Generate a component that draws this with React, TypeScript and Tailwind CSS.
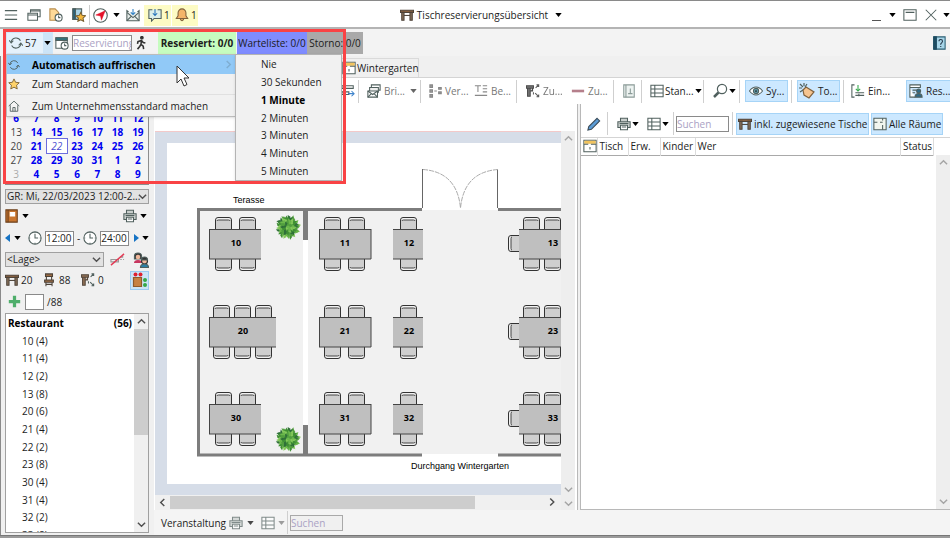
import type { ReactNode } from "react";

// ============================================================
// DATA
// ============================================================
interface Chair {
  x: number;
  y: number;
  side: "top" | "bottom" | "left";
}

interface FloorTable {
  nr: number;
  x: number;
  y: number;
  w: number;
  labelX: number;
  chairs: number[];
  side?: boolean;
}

const ROWS_Y = [229, 317, 404];

const TABLES: FloorTable[] = ROWS_Y.flatMap((y, i) => {
  const n = (i + 1) * 10;
  const wide = i === 1;
  return [
    { nr: n, x: 209, y, w: wide ? 67 : 52, labelX: wide ? 243 : 236, chairs: wide ? [213, 234, 255] : [215, 239] },
    { nr: n + 1, x: 319, y, w: 52, labelX: 345, chairs: [324, 348] },
    { nr: n + 2, x: 393, y, w: 30, labelX: 409, chairs: [400] },
    { nr: n + 3, x: 519, y, w: 90, labelX: 553, chairs: [523, 544, 565], side: true },
  ];
});

const WEEKS = [
  [6, 7, 8, 9, 10, 11, 12],
  [13, 14, 15, 16, 17, 18, 19],
  [20, 21, 22, 23, 24, 25, 26],
  [27, 28, 29, 30, 31, 1, 2],
  [3, 4, 5, 6, 7, 8, 9],
];

const SEATS = ["10 (4)", "11 (4)", "12 (2)", "13 (8)", "20 (6)", "21 (4)", "22 (2)", "23 (8)", "30 (4)", "31 (4)", "32 (2)", "33 (8)"];

const INTERVALS = ["Nie", "30 Sekunden", "1 Minute", "2 Minuten", "3 Minuten", "4 Minuten", "5 Minuten"];

// ============================================================
// ICONS
// ============================================================
function Icon({ children, className = "size-[14px]" }: { children: ReactNode; className?: string }) {
  return (
    <svg viewBox="0 0 16 16" className={`shrink-0 ${className}`} fill="none" stroke="#50605e" strokeWidth="1.2" aria-hidden="true">
      {children}
    </svg>
  );
}

const Caret = ({ className = "fill-black" }: { className?: string }) => (
  <svg viewBox="0 0 8 5" className={`h-[4px] w-[7px] shrink-0 ${className}`} aria-hidden="true">
    <path d="M0 0h8L4 5z" />
  </svg>
);

const Chevron = ({ className = "stroke-[#505050]" }: { className?: string }) => (
  <svg viewBox="0 0 10 10" className={`size-[9px] shrink-0 ${className}`} fill="none" strokeWidth="1.6" aria-hidden="true">
    <path d="M1 3l4 4 4-4" />
  </svg>
);

const SyncIcon = ({ className }: { className?: string }) => (
  <Icon className={className}>
    <path d="M2.5 7a5.6 5.6 0 0 1 10.6-1.6M13.5 9A5.6 5.6 0 0 1 3 10.8" />
    <path d="M.3 5l2.2 3 2.4-2.6M15.7 11l-2.2-3-2.4 2.6" />
  </Icon>
);

const TableIcon = ({ className }: { className?: string }) => (
  <Icon className={className}>
    <path d="M.5 2.500h15V5H.5z" fill="#9b6b43" stroke="#4c4238" />
    <path d="M2 5h2.600v9H2zM11.400 5H14v9h-2.600z" fill="#8a725c" stroke="#4c4238" />
    <path d="M4.600 8.500h6.800" stroke="#4c4238" />
  </Icon>
);

const PrinterIcon = () => (
  <Icon>
    <path d="M4 5V1.500h8V5M4 12H1V5.500h14V12h-3" fill="#c9cfcd" />
    <path d="M4 9.500h8v5H4z" fill="#fff" />
    <path d="M5.500 11.500h5M3 7.500h10" />
  </Icon>
);

const GridIcon = () => (
  <Icon>
    <path d="M1 1.500h14v13H1zM5.500 1.500v13M1 5.800h14M1 10.200h14" fill="#fff" />
  </Icon>
);

const MailIcon = () => (
  <Icon>
    <path d="M1 5v9.500h14V5" fill="#e6ecea" />
    <path d="M1 5l7 6 7-6M1 14.500l5-5M15 14.500l-5-5M1 5V3l2 1.500M15 5V3l-2 1.500" />
    <path d="M8 1v6M5.500 5L8 7.500 10.500 5" stroke="#2d7fc4" />
  </Icon>
);

// Stack of letters, for the print-letters button
const LettersIcon = () => (
  <Icon>
    <path d="M5 5V1h10v6h-2" fill="#fff" />
    <path d="M3 8V4h10v6" fill="#eee" />
    <path d="M1 8h11v7H1z" fill="#fff" />
    <path d="M1 8l5.500 4L12 8M1 15l4-4M12 15l-4-4" />
  </Icon>
);

const ClockIcon = () => (
  <Icon>
    <circle cx="8" cy="8" r="7" fill="#fff" />
    <path d="M8 3.500V8h3.500" />
    <path d="M8 1.500v1M8 13.500v1M1.500 8h1M13.500 8h1" />
  </Icon>
);

const RoomIcon = () => (
  <Icon>
    <path d="M1 1.500h14v13H1z" fill="#fff" />
    <path d="M1.500 2h13v3.500h-13z" fill="#f2c45e" stroke="none" />
    <path d="M1 6h5M9 6h6M8 9v3" />
  </Icon>
);

const StarIcon = ({ className }: { className?: string }) => (
  <Icon className={className}>
    <path d="M8 1.200l2.100 4.500 4.900.6-3.600 3.400.9 4.900L8 12.200l-4.300 2.400.9-4.900L1 6.300l4.900-.6z" fill="#ffd36b" stroke="#7a6132" />
  </Icon>
);

const MoveIcon = () => (
  <Icon>
    <path d="M.5 2h8v2.800h-8zM1.800 4.800h3V14h-3zM5 8h2.500V5" fill="#8f6f54" stroke="#55493e" />
    <path d="M11 4.500l3.500-3.500M12 1h2.500v2.500M10.500 10.500l4 4M12 14.500h2.500V12M8.500 9.500V12" />
  </Icon>
);

// ============================================================
// SMALL PARTS
// ============================================================
const Sep = () => <span className="h-[23px] w-px shrink-0 bg-[#cfcfcf]" />;

function ToolButton({ className = "gap-[3px]", children, active = false, muted = false, label }: {
  className?: string;
  children: ReactNode;
  active?: boolean;
  muted?: boolean;
  label?: string;
}) {
  return (
    <button
      type="button"
      aria-label={label}
      className={`flex h-[22px] shrink-0 items-center whitespace-nowrap ${
        active ? "border border-[#a6d4f7] bg-[#cce8ff]" : ""
      } ${muted ? "text-[#777]" : ""} ${className}`}
    >
      {children}
    </button>
  );
}

// ============================================================
// FLOOR PLAN
// ============================================================
function ChairShape({ x, y, side }: Chair) {
  const turn = side === "top" ? "" : side === "bottom" ? " rotate(180 8.500 6)" : " rotate(-90 8.500 8.500)";
  return (
    <g transform={`translate(${x} ${y})${turn}`}>
      <path d="M1 3v9h15V3z" fill="#cfcfcf" />
      <path d="M.5 12V3q0-2.500 2.500-2.500h11q2.500 0 2.500 2.500v9" fill="none" stroke="#333" />
      <path d="M2 4q0-1 1.500-1h10q1.500 0 1.500 1" fill="none" stroke="#444" />
    </g>
  );
}

// Leaves are laid out on a spiral so that the bush fills evenly
function Plant({ x, y }: { x: number; y: number }) {
  const greens = ["#3f8f34", "#6cb84c", "#2f7038", "#86c95c", "#529f3f"];
  return (
    <g transform={`translate(${x} ${y})`}>
      <circle r="9" fill="#4c9a3e" />
      {Array.from({ length: 70 }, (_, i) => {
        const k = 69 - i;
        const r = Math.sqrt(k) * 1.25;
        const a = k * 137.5;
        return (
          <path
            key={i}
            d="M-2 0L0-1.500 3 0 0 1.500z"
            fill={greens[(i * 3 + (i >> 1)) % 5]}
            transform={`rotate(${a}) translate(${r} 0) rotate(${(i * 53) % 90 - 45})`}
          />
        );
      })}
    </g>
  );
}

function FloorPlan() {
  return (
    <svg viewBox="155 132 600 363" width="600" height="363" className="block max-w-none shrink-0" role="img" aria-label="Tischplan">
      <rect x="155" y="132" width="600" height="363" fill="#d6dde8" />
      <rect x="167" y="143" width="588" height="341" fill="#fff" />
      <rect x="199" y="210" width="556" height="244" fill="#f1f1f1" />
      <rect x="303" y="210" width="5" height="244" fill="#fff" />
      <path d="M422 209.500H198.500V455H422M498 209.500H755M498 455H755" fill="none" stroke="#7d7d7d" strokeWidth="3" />
      <path d="M303 210h5v30h-5zM303 425h5v30h-5z" fill="#7d7d7d" />
      <path d="M422.500 169V208M497.500 169V208" stroke="#666" />
      <path d="M423 169.500Q457 172 460.500 208M498 169.500Q464 172 460.500 208" fill="none" stroke="#aaa" strokeDasharray="5 1" />

      {TABLES.map((t) => (
        <g key={t.nr}>
          {t.chairs.map((cx) => (
            <g key={cx}>
              <ChairShape x={cx} y={t.y - 12} side="top" />
              <ChairShape x={cx} y={t.y + 30} side="bottom" />
            </g>
          ))}
          {t.side && <ChairShape x={t.x - 11} y={t.y + 6} side="left" />}
          <rect x={t.x} y={t.y} width={t.w} height="30" fill="#bfbfbf" />
          <path d={`M${t.x} ${t.y + 0.5}h${t.w}M${t.x} ${t.y + 30}h${t.w}`} stroke="#444" />
          {t.nr % 10 < 2 && <path d={`M${t.x + 0.5} ${t.y}v30`} stroke="#444" />}
          {t.nr % 10 === 1 && <path d={`M${t.x + t.w} ${t.y}v30`} stroke="#444" />}
          <text x={t.labelX} y={t.y + 17} textAnchor="middle" className="fill-black text-[9px] font-bold">{t.nr}</text>
        </g>
      ))}

      <Plant x={288} y={227} />
      <Plant x={288} y={439} />
      <text x="233" y="203" className="fill-black font-['Liberation_Sans',sans-serif] text-[9px]">Terasse</text>
      <text x="411" y="469" className="fill-black font-['Liberation_Sans',sans-serif] text-[9px]">Durchgang Wintergarten</text>
    </svg>
  );
}

// ============================================================
// LAYOUT
// ============================================================
function TitleBar() {
  return (
    <header className="flex h-[29px] shrink-0 items-center border-t border-b-2 border-t-[#8a8a8a] border-b-[#b4b4b4] bg-white pt-[2px]">
      <div className="flex flex-1 items-center pl-1">
        <button type="button" aria-label="Menü" className="w-[23px]">
          <Icon><path d="M1 3h14M1 8h14M1 13h14" /></Icon>
        </button>
        <button type="button" aria-label="Fenster" className="w-[22px]">
          <Icon><path d="M4 5V2h11v8h-3M4 3.500h11M1 6h11v8H1zM1 8h11" /></Icon>
        </button>
        <button type="button" aria-label="Verlauf" className="w-[23px]">
          <Icon>
            <path d="M1 1h6l4 4v9H1z" fill="#ffd997" stroke="#b98d4b" />
            <circle cx="11" cy="11" r="4" fill="#fff" />
            <path d="M11 8.500V11h2" />
          </Icon>
        </button>
        <button type="button" aria-label="Favoriten" className="w-[17px]">
          <Icon>
            <path d="M1 1h10v12H1z" fill="#a9d3e6" />
            <path d="M1 1h3v12H1z" fill="#27627c" />
            <path d="M10 5l1.600 3.400 3.700.5-2.700 2.600.7 3.700L10 13.400l-3.300 1.800.7-3.700L4.700 8.900l3.700-.5z" fill="#f5b83d" stroke="#7a6132" />
          </Icon>
        </button>
        <span className="mr-[3px] h-[20px] w-px bg-[#ccc]" />
        <button type="button" aria-label="Navigation" className="flex w-[33px] items-center gap-[5px]">
          <Icon className="size-[15px]">
            <circle cx="8" cy="8" r="7.200" fill="#fff" />
            <path d="M13 3L9 13 8 8.500 3 7.500z" fill="#e5122a" stroke="#e5122a" strokeWidth="0.500" />
          </Icon>
          <Caret />
        </button>
        <button type="button" aria-label="Nachrichten" className="flex w-[18px] justify-start"><MailIcon /></button>
        <button type="button" className="flex h-[21px] w-[27px] items-center gap-[2px] bg-[#fdfbc4] pl-1">
          <Icon><path d="M5 2H1v10h3v3l3-3h8V2h-4" fill="#dcefe9" /><path d="M8 1v7M5.500 6L8 8.500 10.500 6" stroke="#2372b9" /></Icon>
          1
        </button>
        <button type="button" className="ml-px flex h-[21px] w-[26px] items-center gap-[2px] bg-[#fdfbc4] pl-[3px]">
          <Icon><path d="M8 1a4.500 4.500 0 0 0-4.500 4.500V9L1.500 12h13l-2-3V5.500A4.500 4.500 0 0 0 8 1zM6 12.500q2 4 4 0" fill="#f4b56a" stroke="#80613c" /></Icon>
          1
        </button>
      </div>
      <div className="flex items-center gap-[3px] pl-[8px]">
        <TableIcon />
        <h1>Tischreservierungsübersicht</h1>
        <span className="pl-[4px]"><Caret /></span>
      </div>
      <div className="flex flex-1 items-center justify-end">
        <button type="button" aria-label="Minimieren" className="mr-[8px] flex h-[12px] w-[9px] items-end border-b border-[#555]" />
        <button type="button" aria-label="Optionen"><Caret /></button>
        <button type="button" aria-label="Maximieren" className="ml-[7px]"><Icon><path d="M1 2h14v12H1zM3 5h10" /></Icon></button>
        <button type="button" aria-label="Schließen" className="ml-[7px] mr-[5px]"><Icon><path d="M2 2l12 12M14 2L2 14" /></Icon></button>
        <Caret />
      </div>
    </header>
  );
}

function StatusBar() {
  return (
    <div className="flex h-[27px] shrink-0 items-center bg-[#f3f3f3] pl-[6px] pr-[4px]">
      <button type="button" className="flex h-[22px] w-[47px] items-center gap-[2px] border border-[#d0e6f8] bg-[#e5f1fb] pl-[2px]">
        <SyncIcon />
        57
        <span className="ml-auto flex h-full w-[9px] items-center justify-center bg-[#cce4f7]"><Caret /></span>
      </button>
      <button type="button" aria-label="Kalender" className="w-[19px] pl-[2px]">
        <Icon>
          <path d="M1 2h13v12H1z" fill="#fff" />
          <path d="M1 2h13v3H1z" fill="#2b7482" />
          <circle cx="11" cy="11" r="4" fill="#fff" />
          <path d="M11 8.500V11h2" />
        </Icon>
      </button>
      <input aria-label="Reservierung" placeholder="Reservierung" className="h-[16px] w-[60px] border border-[#8a8a8a] bg-white placeholder:text-[#aaa2c4]" />
      <button type="button" aria-label="Walk-in" className="w-[26px] pl-[2px]">
        <Icon><circle cx="9" cy="2" r="1.500" fill="#333" stroke="#333" /><path d="M8.500 5L8 9.500l2.500 2L11 15M8 9.500L6.500 12 4 15M4 9l.5-2.500 4-1.500 2 2.500L13 8" stroke="#333" strokeWidth="1.800" /></Icon>
      </button>
      <button type="button" className="h-[22px] w-[78px] bg-[#c6fcbf] font-bold whitespace-nowrap">Reserviert: 0/0</button>
      <button type="button" className="ml-px h-[22px] w-[70px] bg-[#7f8cff] whitespace-nowrap">Warteliste: 0/0</button>
      <button type="button" className="h-[22px] w-[56px] bg-[#a9a9a9] whitespace-nowrap">Storno: 0/0</button>
      <button type="button" aria-label="Hilfe" className="ml-auto">
        <Icon>
          <path d="M2 1h13v14H2z" fill="#a7d5e8" stroke="#2b5f73" />
          <path d="M2 1h3v14H2z" fill="#1d4c61" stroke="#1d4c61" />
          <path d="M8 6q0-2 2-2t2 2q0 1-2 3v1M10 11.500v1" stroke="#234" />
        </Icon>
      </button>
    </div>
  );
}

function Calendar() {
  return (
    <div className="flex h-[129px] shrink-0 flex-col justify-end overflow-hidden border border-[#8d8d8d] bg-[#f4f4f4] pb-[3px]">
      <table className="w-full table-fixed text-center">
        <tbody>
          {WEEKS.map((week, w) => (
            <tr key={w} className="h-[14px] leading-[14px]">
              {week.map((day, d) => {
                const selected = w === 2 && d === 2;
                const plain = d === 0 && w > 0;
                return (
                  <td
                    key={d}
                    className={
                      selected
                        ? "bg-white p-0 italic text-[#4a4ad0] outline outline-[#6d6dde]"
                        : plain
                          ? w === 4 ? "p-0 text-[#aaa]" : "p-0 text-[#444]"
                          : "p-0 font-bold text-[#0000f0]"
                    }
                  >
                    {day}
                  </td>
                );
              })}
            </tr>
          ))}
        </tbody>
      </table>
    </div>
  );
}

function Sidebar() {
  return (
    <aside className="mr-[4px] ml-px flex w-[144px] shrink-0 flex-col pb-[2px]">
      <Calendar />
      <label className="relative mt-[4px] block h-[15px] shrink-0">
        <select aria-label="Gruppe" className="block h-full w-full appearance-none border border-[#a0a0a0] bg-[#e2e2e2] px-px leading-[13px]">
          <option>GR: Mi, 22/03/2023 12:00-2...</option>
        </select>
        <span className="pointer-events-none absolute top-[3px] right-[2px]"><Chevron /></span>
      </label>

      <div className="flex h-[23px] shrink-0 items-center justify-between pr-[2px]">
        <button type="button" aria-label="Buch" className="flex items-center gap-[3px]">
          <Icon><path d="M1 1h13v14H1z" fill="#c9762f" stroke="#6b3f1b" /><path d="M6 4h5v4H6z" fill="#fff" stroke="#fff" /><path d="M3.500 1v14" stroke="#6b3f1b" /></Icon>
          <Caret />
        </button>
        <button type="button" aria-label="Drucken" className="flex items-center gap-[3px]"><PrinterIcon /><Caret /></button>
      </div>

      <div className="flex h-[22px] shrink-0 items-center gap-[3px]">
        <button type="button" aria-label="Zurück" className="flex items-center gap-[4px]">
          <svg viewBox="0 0 5 8" className="h-[8px] w-[5px] fill-[#1673c4]"><path d="M5 0v8L0 4z" /></svg>
          <Caret />
        </button>
        <span className="ml-[4px]"><ClockIcon /></span>
        <input aria-label="Von" defaultValue="12:00" className="h-[15px] w-[29px] border border-[#8a8a8a] bg-white" />
        <span>-</span>
        <ClockIcon />
        <input aria-label="Bis" defaultValue="24:00" className="h-[15px] w-[29px] border border-[#8a8a8a] bg-white" />
        <button type="button" aria-label="Weiter" className="ml-auto flex items-center gap-[3px]">
          <svg viewBox="0 0 5 8" className="h-[8px] w-[5px] fill-[#1673c4]"><path d="M0 0v8L5 4z" /></svg>
          <Caret />
        </button>
      </div>

      <div className="flex h-[21px] shrink-0 items-center">
        <label className="relative block h-[15px] w-[99px]">
          <select aria-label="Lage" className="block h-full w-full appearance-none border border-[#a0a0a0] bg-[#e2e2e2] px-px leading-[13px]">
            <option>&lt;Lage&gt;</option>
          </select>
          <span className="pointer-events-none absolute top-[3px] right-[3px]"><Chevron /></span>
        </label>
        <button type="button" aria-label="Nichtraucher" className="ml-[6px]">
          <Icon className="size-[15px]"><path d="M1 8h8v2.500H1zM11 8h1.500M14 8h1M11 5.500h2.500V4" stroke="#999" /><path d="M1 14L15 2" stroke="#e33b55" strokeWidth="1.500" /></Icon>
        </button>
        <button type="button" aria-label="Gäste" className="ml-auto">
          <Icon className="size-[16px]">
            <path d="M1.500 7V4q0-3 3.500-3t3.500 3v3z" fill="#333" />
            <circle cx="5" cy="5" r="2.300" fill="#f0b79a" stroke="none" />
            <path d="M1 11q0-3 4-3t4 3z" fill="#c7365f" stroke="none" />
            <circle cx="11.500" cy="9" r="3" fill="#f0b79a" stroke="#333" />
            <path d="M8.500 8q0-3 3-3t3 3z" fill="#333" />
            <path d="M7.500 15.500q0-3.500 4-3.500t4 3.500z" fill="#2b7fa6" />
          </Icon>
        </button>
      </div>

      <div className="flex h-[20px] shrink-0 items-center">
        <span className="flex w-[37px] items-center gap-[2px]"><TableIcon />20</span>
        <span className="flex w-[39px] items-center gap-[3px]">
          <Icon><path d="M4 1h8v3H4zM3 8h10v2.500H3z" fill="#9b6b43" stroke="#4c4238" /><path d="M5 4v4M11 4v4M4.500 10.500V15M11.500 10.500V15M4.500 13h7" stroke="#4c4238" /></Icon>
          88
        </span>
        <span className="flex items-center gap-[3px]"><MoveIcon />0</span>
        <button type="button" aria-label="Belegung" className="ml-auto flex size-[19px] items-center justify-center border border-[#9ccbf2] bg-[#cce4f7]">
          <Icon className="size-[16px]">
            <path d="M1.500 5.500h8v9h-8z" fill="#c78143" stroke="#8f5a2b" />
            <g stroke="none"><circle cx="3.500" cy="2.500" r="2" fill="#e02030" /><circle cx="8.500" cy="2.500" r="2" fill="#e02030" /><circle cx="13" cy="8" r="2" fill="#35a84a" /><circle cx="13" cy="13" r="2" fill="#35a84a" /></g>
          </Icon>
        </button>
      </div>

      <div className="flex h-[23px] shrink-0 items-center pl-[3px]">
        <button type="button" aria-label="Hinzufügen"><Icon className="size-[13px]"><path d="M8 1v14M1 8h14" stroke="#4fae6b" strokeWidth="4" /></Icon></button>
        <input aria-label="Personen" className="ml-[4px] mr-[3px] h-[16px] w-[19px] border border-[#8a8a8a] bg-white" />
        /88
      </div>

      <div className="flex min-h-0 flex-1 border border-[#a0a0a0] bg-white">
        <div className="flex-1 overflow-hidden">
          <ul className="flex h-[230px] flex-col">
            <li className="flex flex-1 items-center justify-between px-[2px] font-bold text-black"><span>Restaurant</span><span>(56)</span></li>
            {SEATS.map((s) => <li key={s} className="flex flex-1 items-center pl-[16px]">{s}</li>)}
          </ul>
        </div>
        <div className="flex w-[14px] flex-col items-center bg-[#f0f0f0]">
          <span className="flex h-[15px] rotate-180 items-center"><Chevron /></span>
          <span className="h-[106px] w-full bg-[#cdcdcd]" />
          <span className="mt-auto flex h-[15px] items-center"><Chevron /></span>
        </div>
      </div>
    </aside>
  );
}

function MainToolbar() {
  return (
    <div className="flex h-[27px] shrink-0 items-center overflow-hidden border-t border-[#d4d4d4] bg-white pl-[187px]">
      <ToolButton className="w-[17px]" muted label="Anordnen"><Icon><path d="M1 2h13v3H1zM1 9h8v3H1z" /><path d="M8 11h7M12 8l3 3-3 3" stroke="#3e83cb" /></Icon></ToolButton>
      <Sep />
      <ToolButton className="w-[61px] gap-[3px] pl-[8px]" muted><LettersIcon />Bri...<span className="ml-auto pr-[3px]"><Caret className="fill-[#666]" /></span></ToolButton>
      <Sep />
      <ToolButton className="w-[46px] gap-[2px] pl-[8px]" muted><Icon><path d="M1 1h3v3H1zM1 6.500h3v3H1zM1 12h3v3H1zM11 4h3v2h-3zM11 9h3v2h-3zM6 8h3" fill="#999" stroke="#888" /></Icon>Ver...</ToolButton>
      <ToolButton className="w-[49px] gap-[3px] pl-[7px]" muted><Icon><path d="M1 2h7M4.500 2v7M10 2h5M10 5.500h5M10 9h5M1 13h14" stroke="#888" /></Icon>Be...</ToolButton>
      <Sep />
      <ToolButton className="w-[54px] gap-[3px] pl-[9px] grayscale" muted><MoveIcon />Zu...</ToolButton>
      <ToolButton className="w-[42px] gap-[3px]" muted><Icon><path d="M1 8h14" stroke="#b57f8b" strokeWidth="3" /></Icon>Zu...</ToolButton>
      <Sep />
      <ToolButton className="w-[27px] pl-[8px]" muted label="Adressbuch"><Icon><path d="M2 1h12v14H2z" fill="#edf3f1" stroke="#8a9a97" /><path d="M4.500 1v14M7 11h5M9.500 5v6" stroke="#8a9a97" /></Icon></ToolButton>
      <Sep />
      <ToolButton className="w-[61px] gap-px pl-[8px]"><GridIcon />Stan...<Caret /></ToolButton>
      <Sep />
      <ToolButton className="w-[35px] gap-px pl-[8px]" label="Zoom"><Icon className="size-[16px]"><circle cx="10" cy="6" r="4.600" fill="#fff" /><path d="M6.500 9.500L2 14" strokeWidth="2.500" /></Icon><Caret /></ToolButton>
      <Sep />
      <ToolButton active className="ml-[5px] mr-[3px] w-[43px] gap-[3px] pl-[3px]"><Icon><path d="M.5 8Q4 3.500 8 3.500T15.500 8Q12 12.500 8 12.500T.5 8z" fill="#fff" /><circle cx="8" cy="8" r="3" fill="#5f9cad" /><circle cx="8" cy="8" r="1" fill="#222" stroke="none" /></Icon>Sy...</ToolButton>
      <Sep />
      <ToolButton active className="ml-[5px] mr-[3px] w-[43px] gap-[3px] pl-px"><Icon className="size-[16px]"><path d="M4 7l3-3 8 5-5 6-5-3z" fill="#f6c48f" stroke="#80613c" /><path d="M1 1l3 3M5 0v3M0 5h3M8 1L6 4M1 9l3-2" /></Icon>To...</ToolButton>
      <Sep />
      <ToolButton className="w-[62px] gap-[3px] pl-[7px]"><Icon><path d="M4 1H1v14h3M5 13h10M5 10h10M9 11v3" /><path d="M8 1v7M5.500 5.500L8 8l2.500-2.500" stroke="#35a84a" /></Icon>Ein...</ToolButton>
      <ToolButton active className="w-[45px] gap-[3px] pl-[2px]"><Icon><path d="M1 1h12v3H1zM1 4v11h6M4 7h5M4 10h3" fill="#fff" /><circle cx="11" cy="8" r="2.300" fill="#2d6b8a" /><path d="M7 15q0-4 4-4t4 4z" fill="#2d6b8a" /></Icon>Res...</ToolButton>
    </div>
  );
}

function PlanPane() {
  return (
    <section className="flex w-[424px] shrink-0 flex-col border-r border-[#b8b8b8] bg-white">
      <div className="flex min-h-0 flex-1 pt-[27px]">
        <div className="flex min-w-0 flex-1 flex-col pl-px">
          <div className="min-h-0 flex-1 overflow-hidden border-t border-[#f3c9c9] bg-[#d6dde8]"><FloorPlan /></div>
          <div className="flex h-[15px] shrink-0 items-center bg-[#f0f0f0]">
            <span className="flex w-[15px] rotate-90 justify-center"><Chevron /></span>
            <span className="h-[13px] w-[305px] bg-[#cdcdcd]" />
            <span className="ml-auto flex w-[18px] -rotate-90 justify-center"><Chevron /></span>
          </div>
        </div>
        <div className="mr-[2px] flex w-[14px] shrink-0 flex-col items-center bg-[#eee]">
          <span className="flex h-[16px] rotate-180 items-center"><Chevron className="stroke-[#a5a5a5]" /></span>
          <span className="mt-auto flex h-[14px] items-center"><Chevron className="stroke-[#a5a5a5]" /></span>
          <span className="flex h-[14px] items-center"><Chevron className="stroke-[#a5a5a5]" /></span>
        </div>
      </div>
    </section>
  );
}

function ReservationPane() {
  return (
    <section className="ml-[2px] flex min-w-0 flex-1 flex-col border-b border-l border-[#b8b8b8] bg-white">
      <div className="flex h-[33px] shrink-0 items-end overflow-hidden pb-[2px]">
        <ToolButton className="w-[26px] pl-[6px]" label="Bearbeiten"><Icon><path d="M11.500 1.500l3 3L5 14l-4 1 1-4z" fill="#5b9bd5" stroke="#3b4b58" /></Icon></ToolButton>
        <Sep />
        <ToolButton className="w-[39px] gap-px pl-[9px]" label="Liste drucken"><PrinterIcon /><Caret /></ToolButton>
        <ToolButton className="w-[26px] gap-px" label="Layout"><GridIcon /><Caret /></ToolButton>
        <Sep />
        <span className="flex h-[22px] w-[58px] items-center pl-[2px]"><input aria-label="Reservierungen suchen" placeholder="Suchen" className="h-[16px] w-[53px] border border-[#8a8a8a] bg-white placeholder:text-[#aaa2c4]" /></span>
        <Sep />
        <ToolButton active className="ml-[3px] w-[133px] gap-[2px] pl-px"><TableIcon />inkl. zugewiesene Tische</ToolButton>
        <ToolButton active className="ml-[2px] w-[72px] gap-[2px] pl-px"><Icon><path d="M1 1.500h14v13H1z" fill="#f2f6ef" /><path d="M1 6h4M8 6h3M11 1.500V4M11 9v5.500" /></Icon>Alle Räume</ToolButton>
      </div>
      <div className="flex min-h-0 flex-1 border-t border-[#d4d4d4]">
        <div className="min-w-0 flex-1">
          <table className="w-full table-fixed text-left">
            <thead>
              <tr className="h-[17px] border-b border-[#a9a9a9] leading-[14px] [&>th]:border-r [&>th]:border-[#dcdcdc] [&>th]:p-0 [&>th]:pl-[2px] [&>th]:font-normal">
                <th className="w-[16px]" aria-label="Raum"><RoomIcon /></th>
                <th className="w-[31px]">Tisch</th>
                <th className="w-[32px]">Erw.</th>
                <th className="w-[35px]">Kinder</th>
                <th>Wer</th>
                <th className="w-[33px]">Status</th>
              </tr>
            </thead>
          </table>
        </div>
        <div className="mt-[17px] ml-[2px] flex w-[14px] shrink-0 flex-col items-center bg-[#eee]">
          <span className="flex h-[15px] rotate-180 items-center"><Chevron className="stroke-[#a5a5a5]" /></span>
          <span className="mt-auto flex h-[15px] items-center"><Chevron className="stroke-[#a5a5a5]" /></span>
        </div>
      </div>
    </section>
  );
}

function RefreshMenu() {
  return (
    <div role="menu" className="absolute top-[54px] left-[6px] flex w-[230px] flex-col border border-[#bcbcbc] bg-[#f1f1f1] shadow">
      <button type="button" role="menuitem" className="flex h-[19px] items-center bg-[#91c9f7] font-bold text-black">
        <span className="w-[25px] pl-px"><SyncIcon className="size-[12px]" /></span>
        Automatisch auffrischen
        <span className="ml-auto mr-[2px] -rotate-90"><Chevron className="stroke-[#7faed2]" /></span>
      </button>
      <button type="button" role="menuitem" className="flex h-[21px] items-center border-b border-[#e0e0e0]">
        <span className="w-[25px] pl-px"><StarIcon className="size-[12px]" /></span>
        Zum Standard machen
      </button>
      <button type="button" role="menuitem" className="flex h-[21px] items-center">
        <span className="w-[25px] pl-px"><Icon className="size-[12px]"><path d="M1 8l7-6.500L15 8M3 7v8h10V7M6.500 15v-5h3v5" fill="#f5f5f5" /></Icon></span>
        Zum Unternehmensstandard machen
      </button>
    </div>
  );
}

function IntervalMenu() {
  return (
    <div role="menu" className="absolute top-[54px] left-[235px] flex h-[127px] w-[107px] flex-col border border-[#b4b4b4] bg-[#f1f1f1] shadow">
      {INTERVALS.map((label) => (
        <button key={label} type="button" role="menuitem" className={`flex flex-1 items-center pl-[25px] ${label === "1 Minute" ? "font-bold text-black" : ""}`}>
          {label}
        </button>
      ))}
    </div>
  );
}

export default function App() {
  return (
    <div className="relative flex h-screen min-h-[538px] flex-col overflow-hidden bg-[#f0f0f0] font-['Open_Sans','Noto_Sans',sans-serif] text-[10px] leading-[14px] text-[#1c1c1c]">
      <TitleBar />
      <StatusBar />
      <div className="flex min-h-0 flex-1 border-l border-[#8a8a8a] pl-[3px]">
        <Sidebar />
        <div className="flex min-w-0 flex-1 flex-col pl-px">
          <div className="flex h-[21px] shrink-0 items-end pl-[185px]">
            <button type="button" className="flex h-[19px] w-[80px] items-center gap-px border border-b-0 border-[#dadada] px-[2px]"><RoomIcon />Wintergarten</button>
          </div>
          <MainToolbar />
          <div className="flex min-h-0 flex-1"><PlanPane /><ReservationPane /></div>
          <div className="flex h-[25px] shrink-0 items-center bg-[#f4f4f4] pl-[7px]">
            <span className="w-[68px]">Veranstaltung</span>
            <button type="button" aria-label="Veranstaltung drucken" className="flex w-[32px] items-center gap-[4px] opacity-70"><PrinterIcon /><Caret /></button>
            <button type="button" aria-label="Veranstaltung Layout" className="flex w-[26px] items-center gap-[3px] opacity-70"><GridIcon /><Caret className="fill-[#777]" /></button>
            <Sep />
            <input aria-label="Veranstaltung suchen" placeholder="Suchen" className="ml-[2px] h-[16px] w-[53px] border border-[#a9a9a9] bg-[#f0f0f0] placeholder:text-[#aaa2c4]" />
          </div>
        </div>
      </div>
      <div className="h-[3px] shrink-0 border-t border-[#777] bg-[#9a9a9a]" />

      <RefreshMenu />
      <IntervalMenu />
      <div className="pointer-events-none absolute top-[29px] left-[3px] h-[155px] w-[343px] border-[3px] border-[#f94345]" />
      <svg viewBox="0 0 14 22" className="pointer-events-none absolute top-[65px] left-[176px] h-[22px] w-[14px]" aria-hidden="true">
        <path d="M1 1v17l4-4 3 7 3-1.500-3-6.500h5z" fill="#fff" stroke="#333" />
      </svg>
    </div>
  );
}
